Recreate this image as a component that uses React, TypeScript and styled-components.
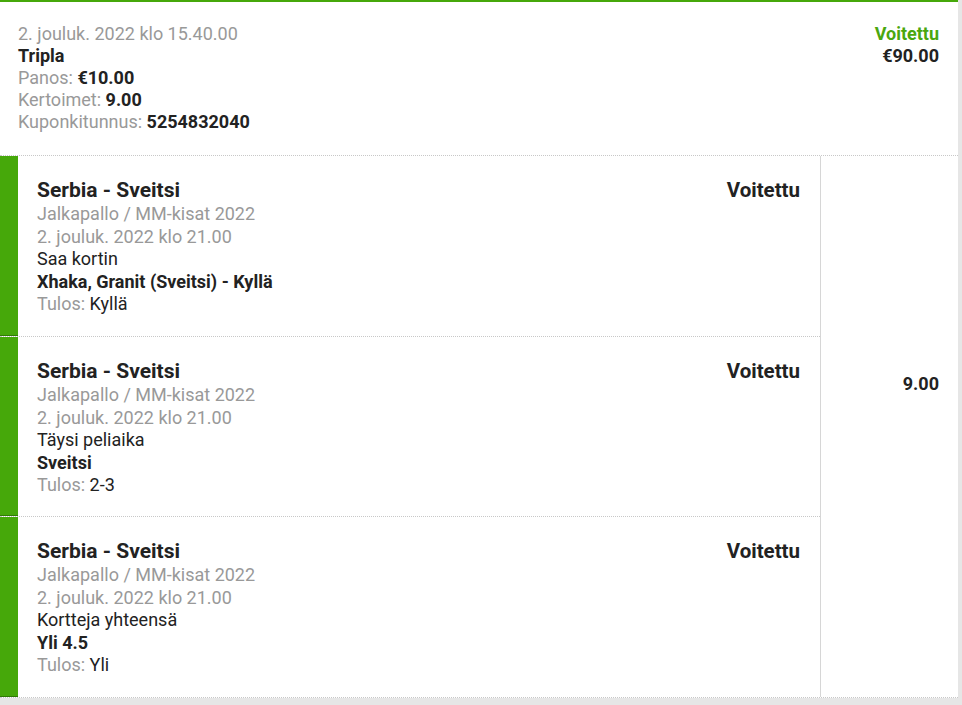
import React from 'react';
import styled, { createGlobalStyle } from 'styled-components';

const GlobalStyle = createGlobalStyle`
  body {
    margin: 0;
    background: #e6e6e6;
    font-family: Roboto, 'Liberation Sans', sans-serif;
    color: #222;
  }
`;

const Card = styled.div`
  width: 958px;
  background: #fff;
  border-top: 2px solid #46a80a;
`;
const Header = styled.div`
  display: flex;
  justify-content: space-between;
  padding: 21px 19px 22px 18px;
  border-bottom: 1px dotted #c8c8c8;
`;
const Info = styled.div`
  font-size: 18px;
  line-height: 22px;
`;
const Line = styled.div<{ $muted?: boolean; $bold?: boolean }>`
  color: ${(p) => (p.$muted ? '#999' : '#222')};
  font-weight: ${(p) => (p.$bold ? 700 : 400)};
`;
const Label = styled.span`
  color: #999;
`;
const Strong = styled.b`
  color: #222;
  font-weight: 700;
`;
const Summary = styled.div`
  text-align: right;
  font-size: 18px;
  line-height: 22px;
  font-weight: 700;
`;
const Status = styled.div<{ $green?: boolean }>`
  color: ${(p) => (p.$green ? '#4aa70e' : '#222')};
`;
const Body = styled.div`
  display: flex;
  border-bottom: 1px dotted #c8c8c8;
`;
const Selections = styled.div`
  flex: 1;
  border-right: 1px solid #d6d6d6;
`;
const Selection = styled.div<{ $first?: boolean; $last?: boolean }>`
  display: flex;
  height: ${(p) => (p.$first ? 181 : 180)}px;
  box-sizing: border-box;
  border-bottom: ${(p) => (p.$last ? 'none' : '1px dotted #c8c8c8')};
`;
const Bar = styled.div`
  width: 18px;
  flex-shrink: 0;
  background: #46a80a;
  box-shadow: inset 0 -1px 0 #2f7a05;
`;
const SelectionMain = styled.div`
  flex: 1;
  display: flex;
  justify-content: space-between;
  padding: 22px 20px 0 19px;
  font-size: 18px;
  line-height: 22.5px;
`;
const Title = styled.div`
  font-size: 21px;
  font-weight: 700;
  line-height: 25px;
`;
const Result = styled.div`
  font-size: 20.5px;
  font-weight: 700;
  line-height: 25px;
`;
const OddsCol = styled.div`
  width: 137px;
  box-sizing: border-box;
  padding: 217px 19px 0 0;
  text-align: right;
  font-size: 18px;
  font-weight: 700;
`;

const picks = [
  { market: 'Saa kortin', pick: 'Xhaka, Granit (Sveitsi) - Kyllä', result: 'Kyllä' },
  { market: 'Täysi peliaika', pick: 'Sveitsi', result: '2-3' },
  { market: 'Kortteja yhteensä', pick: 'Yli 4.5', result: 'Yli' },
];

export default function App() {
  return (
    <>
      <GlobalStyle />
      <Card>
        <Header>
          <Info>
            <Line $muted>2. jouluk. 2022 klo 15.40.00</Line>
            <Line $bold>Tripla</Line>
            <Line>
              <Label>Panos: </Label>
              <Strong>€10.00</Strong>
            </Line>
            <Line>
              <Label>Kertoimet: </Label>
              <Strong>9.00</Strong>
            </Line>
            <Line>
              <Label>Kuponkitunnus: </Label>
              <Strong>5254832040</Strong>
            </Line>
          </Info>
          <Summary>
            <Status $green>Voitettu</Status>
            <Status>€90.00</Status>
          </Summary>
        </Header>
        <Body>
          <Selections>
            {picks.map((p, i) => (
              <Selection key={i} $first={i === 0} $last={i === picks.length - 1}>
                <Bar />
                <SelectionMain>
                  <div>
                    <Title>Serbia - Sveitsi</Title>
                    <Line $muted>Jalkapallo / MM-kisat 2022</Line>
                    <Line $muted>2. jouluk. 2022 klo 21.00</Line>
                    <Line>{p.market}</Line>
                    <Line $bold>{p.pick}</Line>
                    <Line>
                      <Label>Tulos: </Label>
                      {p.result}
                    </Line>
                  </div>
                  <Result>Voitettu</Result>
                </SelectionMain>
              </Selection>
            ))}
          </Selections>
          <OddsCol>9.00</OddsCol>
        </Body>
      </Card>
    </>
  );
}
